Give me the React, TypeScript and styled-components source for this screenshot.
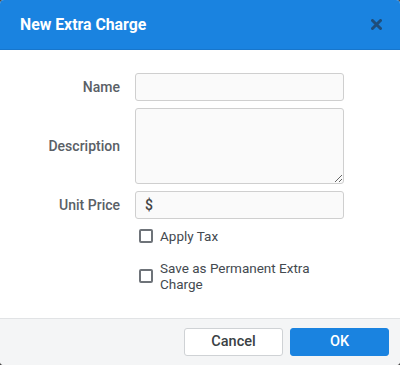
import React from 'react'
import styled, { createGlobalStyle } from 'styled-components'

const GlobalStyle = createGlobalStyle`
    html, body {
        margin: 0;
        padding: 0;
        background: #4a4a4a;
        font-family: Roboto, 'Liberation Sans', sans-serif;
    }
`

const Dialog = styled.div`
    width: 400px;
    height: 365px;
    display: flex;
    flex-direction: column;
    background: #ffffff;
    border-radius: 4px;
    overflow: hidden;
`

const Header = styled.div`
    height: 50px;
    flex-shrink: 0;
    display: flex;
    align-items: center;
    justify-content: space-between;
    padding: 0 16px 0 20px;
    background: #1a83e0;
    border-bottom: 1px solid #1776cc;
    box-sizing: border-box;
`

const Title = styled.h2`
    margin: 0;
    font-size: 15.8px;
    font-weight: 700;
    color: #ffffff;
`

const CloseButton = styled.button`
    border: none;
    background: none;
    padding: 0;
    width: 16px;
    height: 16px;
    display: flex;
    align-items: center;
    justify-content: center;
    cursor: pointer;
`

const Body = styled.div`
    flex: 1;
    padding: 23px 56px 0 0;
    display: flex;
    flex-direction: column;
    gap: 7px;
`

const Row = styled.div`
    display: grid;
    grid-template-columns: 120px 1fr;
    column-gap: 15px;
    align-items: center;
`

const Label = styled.label`
    text-align: right;
    font-size: 14px;
    font-weight: 500;
    color: #5a6066;
`

const Input = styled.input`
    height: 28px;
    box-sizing: border-box;
    border: 1px solid #cfcfcf;
    border-radius: 3px;
    background: #fafafa;
    padding: 0 9px;
    font-family: inherit;
    font-size: 14px;
    font-weight: 500;
    color: #444;
    outline: none;
`

const TextArea = styled.textarea`
    height: 76px;
    box-sizing: border-box;
    border: 1px solid #cfcfcf;
    border-radius: 3px;
    background: #fafafa;
    padding: 6px 9px;
    font-family: inherit;
    font-size: 13px;
    resize: vertical;
    outline: none;
`

const Checks = styled.div`
    display: flex;
    flex-direction: column;
    gap: 16px;
    padding: 2px 0 0 139px;
`

const CheckRow = styled.label`
    display: flex;
    align-items: center;
    gap: 7px;
    width: 196px;
    font-size: 13.5px;
    line-height: 16px;
    color: #444a50;
    cursor: pointer;
`

const Box = styled.span`
    width: 14px;
    height: 14px;
    flex-shrink: 0;
    box-sizing: border-box;
    border: 2px solid #6e7379;
    border-radius: 2px;
    background: #ffffff;
`

const Footer = styled.div`
    height: 47px;
    flex-shrink: 0;
    box-sizing: border-box;
    display: flex;
    justify-content: flex-end;
    align-items: center;
    gap: 7px;
    padding: 0 11px 1px 0;
    background: #f4f5f6;
    border-top: 1px solid #e1e3e5;
`

const Button = styled.button<{ primary?: boolean }>`
    width: 99px;
    height: 28px;
    box-sizing: border-box;
    border-radius: 3px;
    border: 1px solid ${(props) => (props.primary ? '#1a83e0' : '#cfd2d5')};
    background: ${(props) => (props.primary ? '#1a83e0' : '#ffffff')};
    color: ${(props) => (props.primary ? '#ffffff' : '#3a3f44')};
    font-family: inherit;
    font-size: 14.5px;
    font-weight: 500;
    cursor: pointer;
`

const App = () => {
    return (
        <>
            <GlobalStyle />
            <Dialog>
                <Header>
                    <Title>New Extra Charge</Title>
                    <CloseButton aria-label='Close'>
                        <svg width='11' height='11' viewBox='0 0 11 11'>
                            <path
                                d='M1.5 1.5L9.5 9.5M9.5 1.5L1.5 9.5'
                                stroke='#1f4d7a'
                                strokeWidth='3'
                                strokeLinecap='round'
                            />
                        </svg>
                    </CloseButton>
                </Header>
                <Body>
                    <Row>
                        <Label>Name</Label>
                        <Input />
                    </Row>
                    <Row>
                        <Label>Description</Label>
                        <TextArea />
                    </Row>
                    <Row>
                        <Label>Unit Price</Label>
                        <Input defaultValue='$' />
                    </Row>
                    <Checks>
                        <CheckRow>
                            <Box />
                            Apply Tax
                        </CheckRow>
                        <CheckRow>
                            <Box />
                            <span>Save as Permanent Extra Charge</span>
                        </CheckRow>
                    </Checks>
                </Body>
                <Footer>
                    <Button>Cancel</Button>
                    <Button primary>OK</Button>
                </Footer>
            </Dialog>
        </>
    )
}

export default App
